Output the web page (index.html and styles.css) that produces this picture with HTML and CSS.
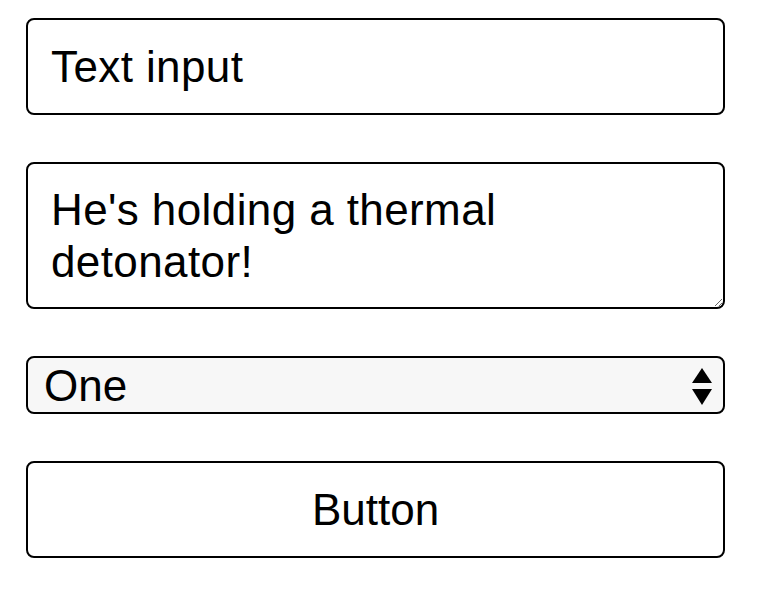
FILE: index.html
```html
<!DOCTYPE html>
<html lang="en">
<head>
<meta charset="utf-8">
<title>Form controls</title>
<link rel="stylesheet" href="styles.css">
</head>
<body>
<form class="form">
  <input class="field text-input" type="text" value="Text input">
  <textarea class="field text-area">He's holding a thermal detonator!</textarea>
  <div class="select-wrap">
    <select class="field select">
      <option>One</option>
      <option>Two</option>
      <option>Three</option>
    </select>
    <svg class="select-arrows" width="20" height="37" viewBox="0 0 20 37" aria-hidden="true">
      <polygon points="10,0 20,15 0,15" fill="#000"/>
      <polygon points="0,21 20,21 10,37" fill="#000"/>
    </svg>
  </div>
  <button class="field button" type="button">Button</button>
</form>
</body>
</html>
```
FILE: styles.css
```css
html, body {
  margin: 0;
  padding: 0;
  background: #fff;
}

body {
  font-family: "Liberation Sans", Arial, Helvetica, sans-serif;
}

.form {
  display: flex;
  flex-direction: column;
  gap: 47px;
  width: 699px;
  margin: 18px 0 0 26px;
}

.field {
  box-sizing: border-box;
  width: 100%;
  margin: 0;
  border: 2px solid #000;
  border-radius: 8px;
  background: #fff;
  color: #000;
  font-family: "Liberation Sans", Arial, Helvetica, sans-serif;
  font-size: 44px;
  outline: none;
}

.text-input {
  height: 97px;
  padding: 0 23px;
  letter-spacing: 0.4px;
}

.text-area {
  display: block;
  height: 147px;
  padding: 20px 60px 0 23px;
  line-height: 52px;
  letter-spacing: 0.4px;
  resize: vertical;
  overflow: hidden;
}

.select-wrap {
  position: relative;
}

.select {
  display: block;
  height: 58px;
  padding: 0 50px 0 16px;
  background: #f7f7f7;
  -webkit-appearance: none;
  appearance: none;
}

.select-arrows {
  position: absolute;
  right: 13px;
  top: 12px;
  pointer-events: none;
}

.button {
  height: 97px;
  padding: 0;
  text-align: center;
  cursor: pointer;
}
```
